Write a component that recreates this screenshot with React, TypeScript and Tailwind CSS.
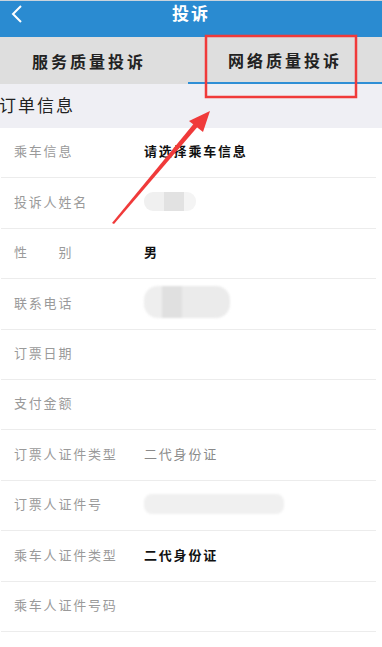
import React from 'react';

interface Row {
  label: string;
  value?: string;
  strong?: boolean;
  blur?: 'name' | 'phone' | 'id';
}

const rows: Row[] = [
  { label: '乘车信息', value: '请选择乘车信息', strong: true },
  { label: '投诉人姓名', blur: 'name' },
  { label: '性\u3000\u3000别', value: '男', strong: true },
  { label: '联系电话', blur: 'phone' },
  { label: '订票日期' },
  { label: '支付金额' },
  { label: '订票人证件类型', value: '二代身份证' },
  { label: '订票人证件号', blur: 'id' },
  { label: '乘车人证件类型', value: '二代身份证', strong: true },
  { label: '乘车人证件号码' }
];

const font = { fontFamily: '"Noto Sans CJK SC", "Noto Sans", sans-serif' };

function Blur({ kind }: { kind: 'name' | 'phone' | 'id' }) {
  if (kind === 'name') {
    return (
      <div className="flex h-[19px] w-[52px] overflow-hidden rounded-[9px] blur-[0.5px]">
        <div className="w-[20px] bg-[#f0f0f0]" />
        <div className="w-[20px] bg-[#e2e2e2]" />
        <div className="flex-1 bg-[#f4f4f4]" />
      </div>
    );
  }
  if (kind === 'phone') {
    return (
      <div className="flex h-[32px] w-[86px] overflow-hidden rounded-[14px] blur-[1px]">
        <div className="w-[18px] bg-[#eeeeee]" />
        <div className="w-[20px] bg-[#e0e0e0]" />
        <div className="flex-1 bg-[#ebebeb]" />
      </div>
    );
  }
  return <div className="h-[20px] w-[140px] rounded-[8px] bg-[#f0f0f0] blur-[1px]" />;
}

export default function App() {
  return (
    <div className="relative h-[647px] w-[382px] overflow-hidden bg-white" style={font}>
      <div className="h-[1px] bg-[#c9d3dc]" />
      <div className="relative flex h-[36px] items-start justify-center bg-[#2a8bd1]">
        <svg className="absolute left-[10px] top-[3px]" width="14" height="20" viewBox="0 0 14 20">
          <path d="M11 2 L3 10 L11 18" fill="none" stroke="white" strokeWidth="2" />
        </svg>
        <span className="mt-[1px] text-[17px] font-bold leading-[22px] tracking-[2px] text-white">投诉</span>
      </div>
      <div className="flex h-[47px] bg-[#dedede]">
        <div className="flex w-[188px] items-center justify-center pr-[10px] text-[16px] font-bold tracking-[3px] text-[#222]">
          服务质量投诉
        </div>
        <div className="flex flex-1 items-center justify-center border-b-2 border-[#2f8fd6] text-[16px] font-bold tracking-[3px] text-[#222]">
          网络质量投诉
        </div>
      </div>
      <div className="flex h-[44px] items-center bg-[#efeff4] pb-[2px] text-[17px] tracking-[2px] text-[#222]">
        <span className="-ml-[1px]">订单信息</span>
      </div>
      {rows.map((row) => (
        <div key={row.label} className="ml-[1px] mr-[6px] flex h-[50.4px] items-center border-b border-[#ececec] pb-[3px]">
          <div className="w-[143px] pl-[13px] text-[13px] tracking-[1.8px] text-[#9a9a9a]">{row.label}</div>
          {row.value && (
            <div
              className={
                row.strong
                  ? 'text-[13px] font-bold tracking-[1.8px] text-[#111]'
                  : 'text-[13px] tracking-[1.8px] text-[#8a8a8a]'
              }
            >
              {row.value}
            </div>
          )}
          {row.blur && <Blur kind={row.blur} />}
        </div>
      ))}
      <svg className="pointer-events-none absolute left-0 top-0" width="382" height="647">
        <rect x="206" y="36" width="150" height="61" fill="none" stroke="#f03a3a" strokeWidth="2.5" />
        <polygon points="112,223 114,224 200,124 196,121" fill="#f03a3a" />
        <polygon points="210,111 189,121 203,132" fill="#f03a3a" />
      </svg>
    </div>
  );
}
